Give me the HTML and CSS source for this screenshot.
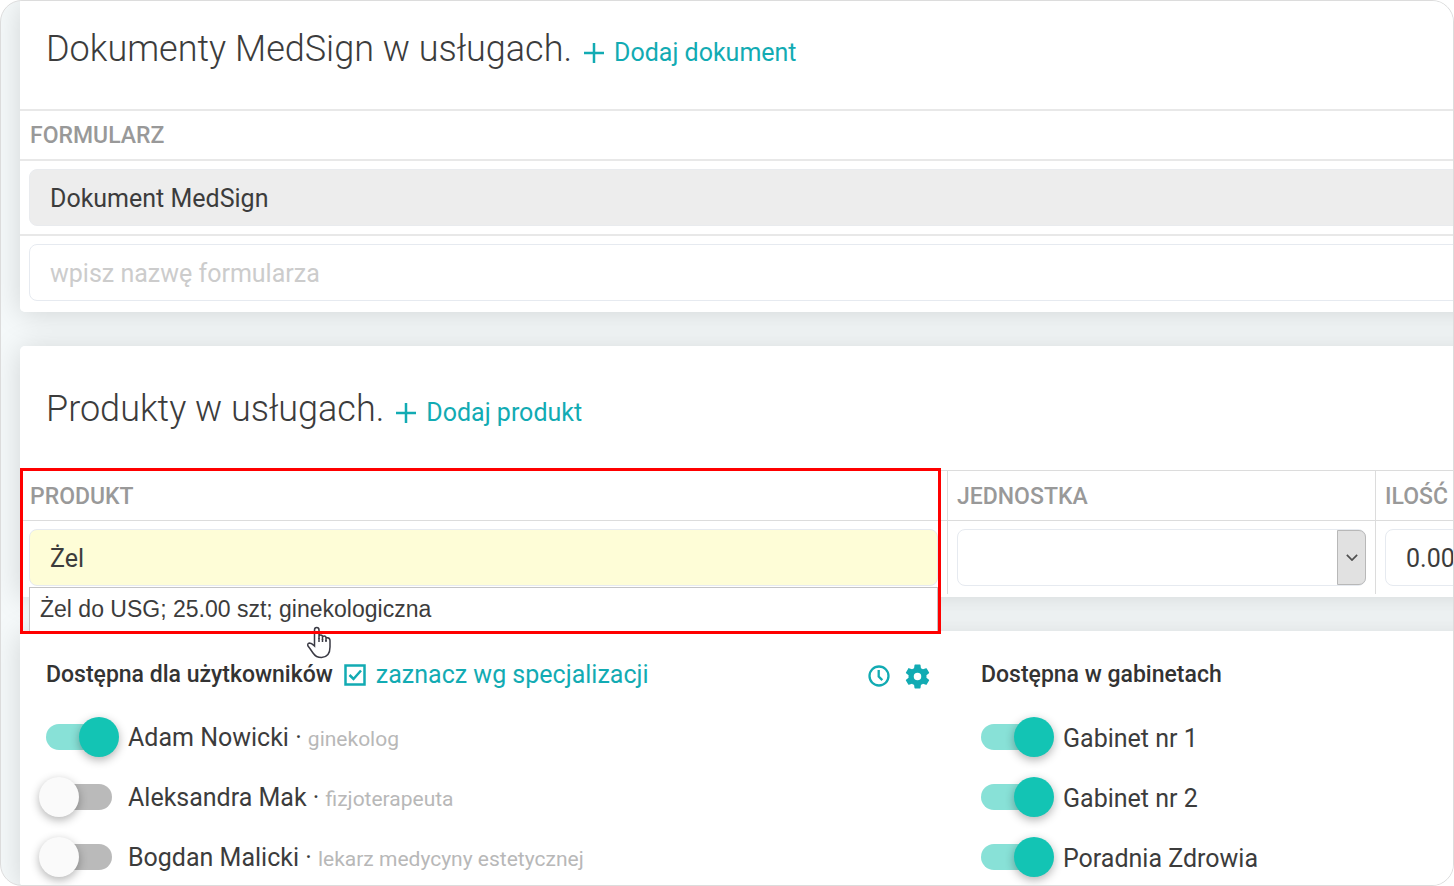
FILE: index.html
```html
<!DOCTYPE html>
<html lang="pl">
<head>
<meta charset="utf-8">
<meta name="viewport" content="width=device-width, initial-scale=1">
<title>Dokumenty i produkty w usługach</title>
<link rel="stylesheet" href="styles.css">
</head>
<body>
<main class="frame">
  <section class="card card-documents">
    <header class="card-header">
      <h2 class="card-title">Dokumenty MedSign w usługach.</h2>
      <a class="action" href="#">
        <svg class="icon-plus" viewBox="0 0 20 20" aria-hidden="true"><path d="M10 0v20M0 10h20"/></svg>
        <span>Dodaj dokument</span>
      </a>
    </header>
    <table class="grid grid-documents">
      <thead>
        <tr><th scope="col">Formularz</th></tr>
      </thead>
      <tbody>
        <tr><td><input class="field field-readonly" type="text" value="Dokument MedSign" aria-label="Formularz" readonly></td></tr>
        <tr><td><input class="field" type="text" placeholder="wpisz nazwę formularza" aria-label="Nowy formularz"></td></tr>
      </tbody>
    </table>
  </section>

  <section class="card">
    <header class="card-header">
      <h2 class="card-title">Produkty w usługach.</h2>
      <a class="action" href="#">
        <svg class="icon-plus" viewBox="0 0 20 20" aria-hidden="true"><path d="M10 0v20M0 10h20"/></svg>
        <span>Dodaj produkt</span>
      </a>
    </header>
    <table class="grid grid-products">
      <thead>
        <tr>
          <th class="col-product" scope="col">Produkt<span class="highlight"></span></th>
          <th class="col-unit" scope="col">Jednostka</th>
          <th class="col-amount" scope="col">Ilość</th>
        </tr>
      </thead>
      <tbody>
        <tr>
          <td class="cell-product">
            <input class="field field-active" type="text" value="Żel" aria-label="Produkt">
            <ul class="suggestions"><li>Żel do USG; 25.00 szt; ginekologiczna</li></ul>
            <svg class="pointer" viewBox="0 0 26 33" aria-hidden="true">
              <path d="M8.500 20V4Q8.500 1.500 10.700 1.500Q13 1.500 13 4V13V10.500Q13 9 14.700 9Q16.500 9 16.500 11V14V11.500Q16.500 10 18.200 10Q20 10 20 12V15V13Q20 11.500 21.500 11.700Q24 12 24 14.500V21Q24 31 15.500 31.500Q10 31.500 7 27Q4 22.500 2 20Q1 17.500 3.500 17Q5.500 17 8.500 20Z"/>
              <path d="M13 12v4M16.500 13v3M20 14v2"/>
            </svg>
          </td>
          <td>
            <div class="select-wrap">
              <select class="field field-select" aria-label="Jednostka"><option></option></select>
              <span class="select-arrow"><svg viewBox="0 0 14 8" aria-hidden="true"><path d="M1 1l6 6 6-6"/></svg></span>
            </div>
          </td>
          <td><input class="field" type="text" value="0.00" aria-label="Ilość"></td>
        </tr>
      </tbody>
    </table>
  </section>

  <section class="card card-access">
    <div class="access">
      <header class="access-header">
        <h3 class="access-title">Dostępna dla użytkowników</h3>
        <a class="action" href="#">
          <svg class="icon-check" viewBox="0 0 22 22" aria-hidden="true"><path d="M1.500 1.500h19v19h-19zM5.500 11l4 4 7.500-8.500"/></svg>
          <span>zaznacz wg specjalizacji</span>
        </a>
        <div class="tools">
          <button class="tool" type="button" aria-label="Historia">
            <svg class="icon-clock" viewBox="0 0 22 22" aria-hidden="true"><circle cx="11" cy="11" r="9.500"/><path d="M10.700 5v6.500l3.600 3.600"/></svg>
          </button>
          <button class="tool" type="button" aria-label="Ustawienia">
            <svg class="icon-gear" viewBox="2 2 20 20" aria-hidden="true"><path d="M19.140 12.940c.04-.3.060-.61.060-.94 0-.32-.02-.64-.07-.94l2.030-1.580c.18-.14.230-.41.120-.61l-1.920-3.320c-.12-.22-.37-.29-.59-.22l-2.390.96c-.5-.38-1.030-.7-1.620-.94l-.36-2.540c-.04-.24-.24-.41-.48-.41h-3.840c-.24 0-.43.17-.47.41l-.36 2.540c-.59.24-1.130.57-1.620.94l-2.390-.96c-.22-.08-.47 0-.59.22L2.740 8.870c-.12.21-.08.47.12.61l2.030 1.580c-.05.3-.09.63-.09.94s.02.64.07.94l-2.030 1.580c-.18.14-.23.41-.12.61l1.920 3.320c.12.22.37.29.59.22l2.390-.96c.5.38 1.030.7 1.620.94l.36 2.540c.05.24.24.41.48.41h3.840c.24 0 .44-.17.47-.41l.36-2.540c.59-.24 1.130-.56 1.620-.94l2.390.96c.22.08.47 0 .59-.22l1.920-3.320c.12-.22.070-.47-.12-.61zM12 15a3 3 0 1 1 0-6 3 3 0 0 1 0 6z"/></svg>
          </button>
        </div>
      </header>
      <label class="toggle-row"><input class="toggle" type="checkbox" checked><span>Adam Nowicki · <small>ginekolog</small></span></label>
      <label class="toggle-row"><input class="toggle" type="checkbox"><span>Aleksandra Mak · <small>fizjoterapeuta</small></span></label>
      <label class="toggle-row"><input class="toggle" type="checkbox"><span>Bogdan Malicki · <small>lekarz medycyny estetycznej</small></span></label>
    </div>
    <div class="access">
      <header class="access-header">
        <h3 class="access-title">Dostępna w gabinetach</h3>
      </header>
      <label class="toggle-row"><input class="toggle" type="checkbox" checked><span>Gabinet nr 1</span></label>
      <label class="toggle-row"><input class="toggle" type="checkbox" checked><span>Gabinet nr 2</span></label>
      <label class="toggle-row"><input class="toggle" type="checkbox" checked><span>Poradnia Zdrowia</span></label>
    </div>
  </section>
</main>
</body>
</html>
```
FILE: styles.css
```css
* {
  box-sizing: border-box;
}

body {
  margin: 0;
  background: #fff;
  color: #3c3c3c;
  font-family: Roboto, "Liberation Sans", sans-serif;
  font-size: 25px;
  line-height: 32px;
}

.frame {
  position: relative;
  z-index: 0;
  height: 100vh;
  overflow: hidden;
  display: flex;
  flex-direction: column;
  gap: 34px;
  padding-left: 19px;
  border: 1px solid #dcdcdc;
  border-radius: 22px;
  background: #f5f9fa;
}

/* Cards run past the right edge of the clipped frame. */
.card {
  position: relative;
  flex-shrink: 0;
  margin-right: -64px;
  padding-bottom: 3px;
  border-radius: 5px;
  background: #fff;
}

/* The shadow sits behind every card, so neighbours stay clean. */
.card::before {
  content: "";
  position: absolute;
  inset: 0;
  z-index: -1;
  border-radius: 5px;
  box-shadow: 0 2px 30px rgba(0, 0, 0, 0.15);
}

.card-documents,
.card-documents::before {
  border-top-left-radius: 0;
}

.card-header {
  display: flex;
  align-items: flex-start;
  gap: 12px;
  height: 124px;
  padding: 39px 26px 0;
}

.card-header .action {
  margin-top: 12px;
}

.card-documents .card-header {
  height: 108px;
  padding-top: 24px;
}

.card-title {
  margin: 0;
  font-size: 36px;
  line-height: 48px;
  font-weight: 300;
}

.action {
  display: flex;
  align-items: center;
  gap: 10px;
  color: #12abb3;
  text-decoration: none;
}

svg {
  display: block;
  fill: none;
  stroke: currentColor;
}

.icon-plus {
  width: 20px;
  height: 20px;
  stroke-width: 2.5;
}

.grid {
  width: 100%;
  table-layout: fixed;
  border-collapse: separate;
  border-spacing: 0;
}

.grid th {
  height: 50px;
  padding: 2px 10px 0;
  border-top: 1px solid #dcdcdc;
  color: #999;
  font-size: 23px;
  font-weight: 500;
  text-align: left;
  text-transform: uppercase;
}

.grid td {
  padding: 8px 9px;
  border-top: 1px solid #dcdcdc;
}

.grid-documents th,
.grid-documents td {
  border-top: 2px solid #e8e8e8;
}

.grid th + th,
.grid td + td {
  border-left: 1px solid #dcdcdc;
}

.grid th + th {
  padding-left: 9px;
}

.col-product {
  position: relative;
}

.col-unit {
  width: 428px;
}

.col-amount {
  width: 142px;
}

.field {
  display: block;
  width: 100%;
  height: 57px;
  padding: 2px 20px 0;
  border: 1px solid #e6eaf0;
  border-radius: 8px;
  background: #fff;
  color: #3c3c3c;
  font: inherit;
  outline: 0;
}

.field::placeholder {
  color: #ccc;
  opacity: 1;
}

.field-readonly {
  background: #ededed;
  border-color: #e9ebee;
}

.field-active {
  background: #fefdd7;
}

.select-wrap {
  display: grid;
  grid-template-columns: 1fr 29px;
}

.field-select {
  grid-area: 1 / 1 / 2 / 3;
  appearance: none;
}

.select-arrow {
  grid-area: 1 / 2;
  display: flex;
  align-items: center;
  justify-content: center;
  margin: 1px 0;
  border: 1px solid #b8b8b8;
  border-radius: 0 7px 7px 0;
  background: #e1e1e1;
  color: #505050;
  pointer-events: none;
}

.select-arrow svg {
  width: 12px;
  height: 7px;
  stroke-width: 2;
}

.cell-product {
  position: relative;
}

.suggestions {
  position: absolute;
  z-index: 1;
  top: 66px;
  left: 9px;
  right: 9px;
  margin: 0;
  padding: 5px 10px 8px;
  border: 1px solid #c4c4c4;
  background: #fff;
  color: #3c3c3c;
  font-family: "Liberation Sans", Arial, sans-serif;
  font-size: 23px;
  list-style: none;
}

.highlight {
  position: absolute;
  z-index: 3;
  top: -3px;
  left: 0;
  right: 6px;
  height: 166px;
  border: 3px solid #f00;
}

.pointer {
  position: absolute;
  z-index: 2;
  top: 105px;
  left: 286px;
  width: 26px;
  height: 33px;
  color: #3a3a44;
  fill: #fff;
  stroke-width: 1.5;
}

.card-access {
  display: grid;
  grid-template-columns: 884px 1fr;
  gap: 51px;
  padding: 26px 26px 0;
}

.access-header {
  display: flex;
  align-items: center;
  gap: 11px;
  height: 36px;
  margin-bottom: 14px;
}

.access-title {
  margin: 0;
  color: #333;
  font-size: 23px;
  line-height: 32px;
  font-weight: 500;
}

.icon-check {
  width: 22px;
  height: 22px;
  stroke-width: 2.5;
}

.tools {
  display: flex;
  align-items: center;
  gap: 15px;
  margin-left: auto;
  padding-top: 2px;
}

.tool {
  padding: 0;
  border: 0;
  background: none;
  color: #12abb3;
  cursor: pointer;
}

.icon-clock {
  width: 22px;
  height: 22px;
  stroke-width: 2.3;
}

.icon-gear {
  width: 25px;
  height: 25px;
  fill: currentColor;
  stroke: none;
}

.toggle-row {
  display: flex;
  align-items: center;
  gap: 16px;
  height: 60px;
}

.toggle-row span {
  padding-top: 3px;
}

.toggle-row small {
  color: #b8b8b8;
  font-size: 21px;
}

.toggle {
  appearance: none;
  display: flex;
  align-items: center;
  flex-shrink: 0;
  width: 66px;
  height: 26px;
  margin: 0;
  border-radius: 13px;
  background: #bababa;
}

.toggle::before {
  content: "";
  width: 40px;
  height: 40px;
  flex-shrink: 0;
  margin-left: -7px;
  border-radius: 50%;
  background: #fafafa;
  box-shadow: 0 3px 10px rgba(0, 0, 0, 0.3);
}

.toggle:checked {
  background: #88e1d7;
}

.toggle:checked::before {
  margin-left: 33px;
  background: #13c4b4;
}
```
